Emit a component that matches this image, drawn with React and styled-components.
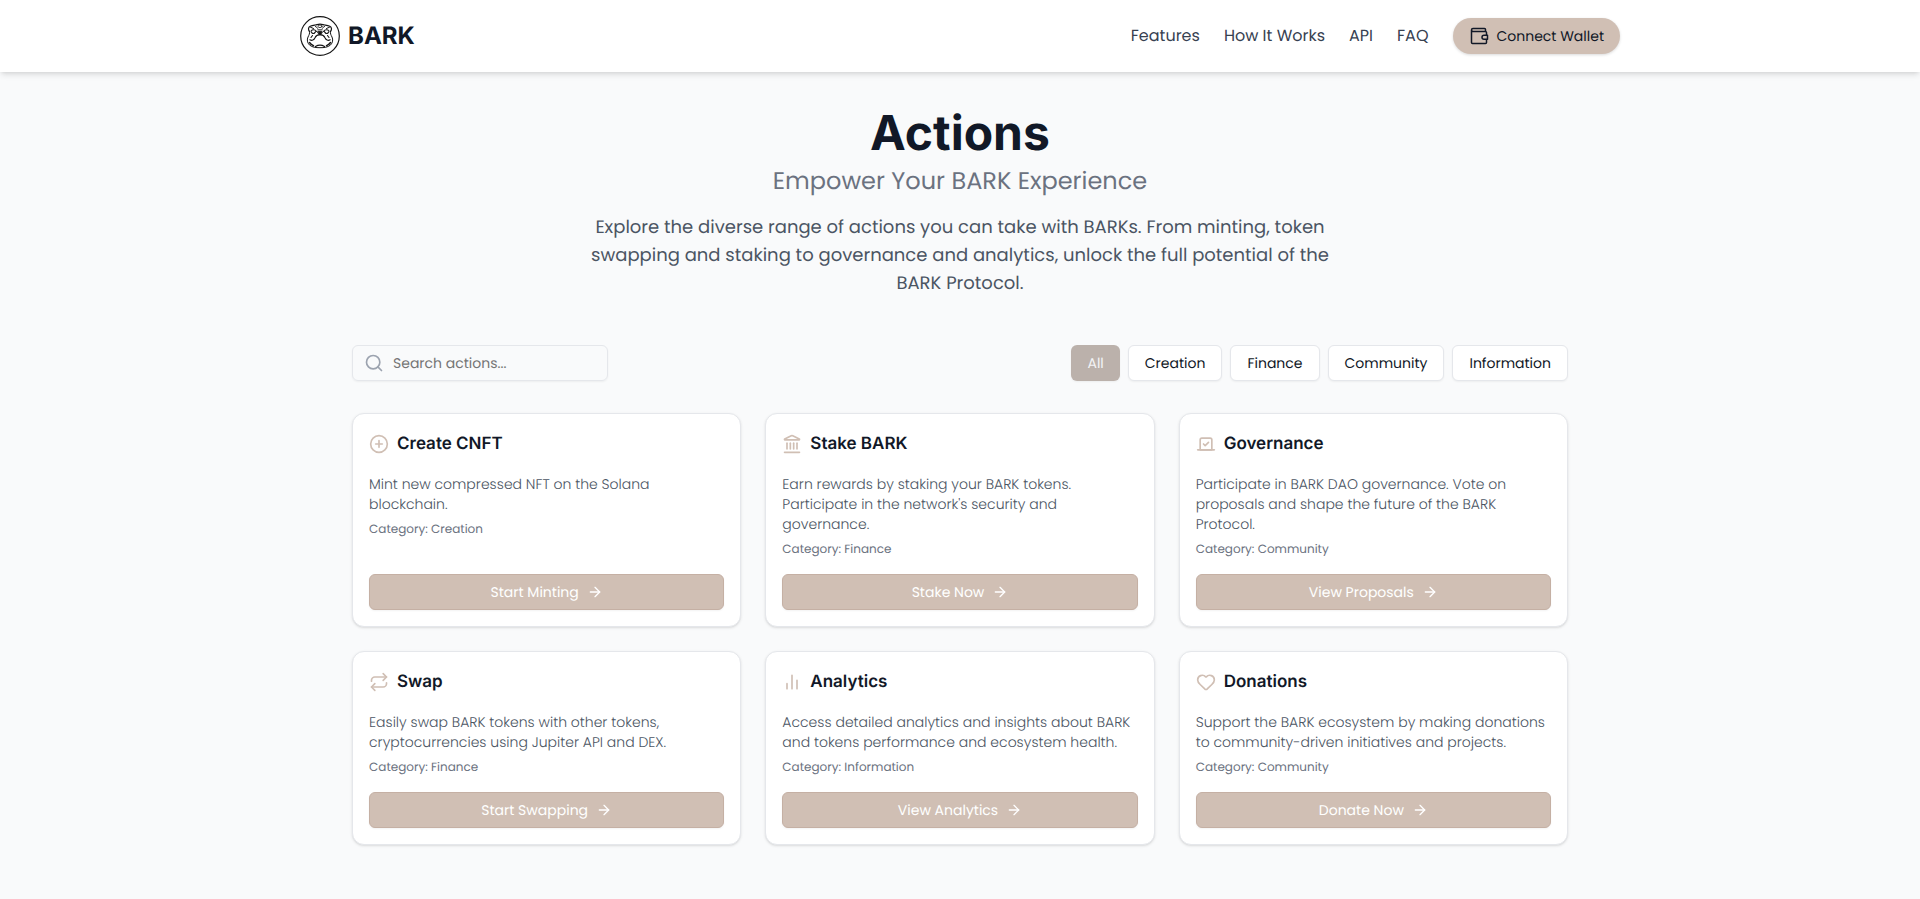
import React, { useState } from "react";
import styled, { createGlobalStyle } from "styled-components";
import { Search, CirclePlus, Landmark, Vote, Repeat, Heart, ArrowRight } from "lucide-react";

const Global = createGlobalStyle`
  *, *::before, *::after { box-sizing: border-box; }
  body {
    margin: 0;
    background: #f9fafb;
    color: #111827;
    font-family: Poppins, Inter, "Open Sans", sans-serif;
    text-rendering: geometricPrecision;
  }
  h1, h2, p { margin: 0; }
  button, input { font: inherit; text-rendering: inherit; }
`;

const Page = styled.div`
  min-height: 100vh;
`;

const Header = styled.header`
  background: #fff;
  box-shadow: 0 4px 6px -1px rgba(0, 0, 0, 0.1), 0 2px 4px -2px rgba(0, 0, 0, 0.1);
`;

const HeaderInner = styled.div`
  display: flex;
  align-items: center;
  justify-content: space-between;
  max-width: 1400px;
  margin: 0 auto;
  padding: 16px 40px;
`;

const Brand = styled.a`
  display: flex;
  align-items: center;
  gap: 8px;
  color: #111827;
  font-family: Inter, sans-serif;
  font-size: 24px;
  font-weight: 700;
  line-height: 32px;
  text-decoration: none;
`;

const Nav = styled.nav`
  display: flex;
  align-items: center;
  gap: 24px;
`;

const NavLink = styled.a`
  color: #374151;
  font-size: 16px;
  line-height: 24px;
  text-decoration: none;
`;

const WalletButton = styled.button`
  display: flex;
  align-items: center;
  justify-content: center;
  gap: 8px;
  height: 36px;
  padding: 0 16px;
  border: 0;
  border-radius: 18px;
  background: #d0bfb4;
  color: #111827;
  font-size: 14px;
  box-shadow: 0 1px 3px rgba(0, 0, 0, 0.15);
`;

const Main = styled.main`
  max-width: 1280px;
  margin: 0 auto;
  padding: 32px 32px 54px;
`;

const Hero = styled.section`
  text-align: center;
  margin-bottom: 47px;
`;

const Title = styled.h1`
  font-family: Inter, sans-serif;
  font-size: 48px;
  font-weight: 700;
  line-height: 57px;
  margin-bottom: 5px;
`;

const Subtitle = styled.p`
  color: #6b7280;
  font-size: 24px;
  line-height: 32px;
  margin-bottom: 16px;
`;

const Lead = styled.p`
  max-width: 768px;
  margin: 0 auto;
  color: #4b5563;
  font-size: 18px;
  line-height: 28px;
`;

const Toolbar = styled.div`
  display: flex;
  align-items: center;
  justify-content: space-between;
  margin-bottom: 32px;
`;

const SearchBox = styled.label`
  display: flex;
  align-items: center;
  gap: 9px;
  width: 256px;
  height: 36px;
  padding: 0 11px;
  border: 1px solid #e5e7eb;
  border-radius: 6px;
  color: #9ca3af;
  box-shadow: 0 1px 2px rgba(0, 0, 0, 0.05);
`;

const SearchInput = styled.input`
  flex: 1;
  min-width: 0;
  padding: 0;
  border: 0;
  outline: 0;
  background: transparent;
  color: #111827;
  font-size: 14px;
  &::placeholder { color: #757575; opacity: 1; }
`;

const Filters = styled.div`
  display: flex;
  gap: 8px;
`;

const FilterButton = styled.button`
  height: 36px;
  padding: 0 16px;
  border: ${(p) => (p.$active ? "0" : "1px solid #e5e7eb")};
  border-radius: 6px;
  background: ${(p) => (p.$active ? "#bbb1ab" : "#fff")};
  color: ${(p) => (p.$active ? "#f3f4f6" : "#111827")};
  font-size: 14px;
  box-shadow: 0 1px 2px rgba(0, 0, 0, 0.05);
`;

const Grid = styled.div`
  display: grid;
  grid-template-columns: repeat(3, minmax(0, 1fr));
  gap: 24px;
`;

const Card = styled.article`
  display: flex;
  flex-direction: column;
  padding: 16px;
  border: 1px solid #e5e7eb;
  border-radius: 12px;
  background: #fff;
  box-shadow: 0 1px 3px rgba(0, 0, 0, 0.1), 0 1px 2px -1px rgba(0, 0, 0, 0.1);
`;

const CardHeader = styled.header`
  display: flex;
  align-items: center;
  gap: 8px;
  margin-bottom: 16px;
  color: #d0bfb4;
`;

const CardTitle = styled.h2`
  color: #111827;
  font-family: Inter, sans-serif;
  font-size: 17px;
  font-weight: 600;
  line-height: 28px;
`;

const Description = styled.p`
  color: #4b5563;
  font-size: 14px;
  font-weight: 300;
  line-height: 20px;
  margin-bottom: 8px;
`;

const Category = styled.p`
  color: #6b7280;
  font-size: 12px;
  line-height: 16px;
  margin-bottom: 16px;
`;

const ActionButton = styled.button`
  display: flex;
  align-items: center;
  justify-content: center;
  gap: 8px;
  height: 36px;
  margin-top: auto;
  border: 1px solid #c5b0a4;
  border-radius: 6px;
  background: #d0bfb4;
  color: #fff;
  font-size: 14px;
  box-shadow: 0 1px 2px rgba(0, 0, 0, 0.05);
`;

const Logo = () => (
  <svg width="40" height="40" viewBox="0 0 40 40" fill="none" stroke="#151515" strokeLinecap="round" strokeLinejoin="round" aria-hidden="true">
    <circle cx="20" cy="20" r="19.3" strokeWidth="1.2" />
    {/* head, ears and brow */}
    <path d="M9.500 15.500C8 13.800 8.200 11 10.200 10.200c2-.8 3.800-1 5-1.200 1.800-.2 2.700-.8 4.800-.8s3 .6 4.800.8c1.200.2 3 .4 5 1.200 2 .8 2.200 3.600.7 5.300" strokeWidth="1.200" />
    <path d="M9.500 15.500c.5 2-.5 3.500-1.500 5.500-1.200 2.600-.8 5.800 1.500 8 2.600 2.400 6.500 2.700 10.500 2.700s7.900-.3 10.500-2.700c2.300-2.200 2.700-5.400 1.500-8-1-2-2-3.500-1.500-5.500" strokeWidth="1" />
    <path d="M10.500 11.200l3 1.300M29.500 11.200l-3 1.300M15.500 10.500c1 .2 1.500 1 2 1.800M24.500 10.500c-1 .2-1.500 1-2 1.800" strokeWidth="1" />
    <ellipse cx="20" cy="10.300" rx="2" ry="1.300" strokeWidth=".8" />
    {/* eyes and nose */}
    <path d="M11 15c1.500-1.800 4-1.600 5.200.2L14 17.500c-1.500.3-2.800-.8-3-2.500ZM29 15c-1.500-1.800-4-1.600-5.200.2L26 17.500c1.500.3 2.800-.8 3-2.500Z" strokeWidth="1.100" />
    <path d="M16.200 15.200 18 16.500M23.800 15.200 22 16.500M17.800 13.800h4.400" strokeWidth=".9" />
    <path d="M18.300 15.300h3.400v2.100L20 18.600l-1.700-1.200Z" fill="#151515" strokeWidth=".8" />
    {/* muzzle and jowls */}
    <path d="M20 18.600c-2.500.2-4.200 1.200-5 3.200-1 2.300-3 3.200-5.200 2M20 18.600c2.500.2 4.200 1.200 5 3.200 1 2.300 3 3.200 5.200 2M12.500 19.500l-1.500 2M27.500 19.500l1.500 2" strokeWidth="1.100" />
    <path d="M9.500 26.500c1 1.500 2.200 2.600 4 3.200M30.500 26.500c-1 1.500-2.200 2.600-4 3.200M15.500 30.500c2.800-1.700 6.200-1.700 9 0" strokeWidth="1.400" />
  </svg>
);

const WalletIcon = () => (
  <svg width="20" height="20" viewBox="0 0 20 20" fill="none" stroke="currentColor" strokeWidth="1.500" strokeLinejoin="round" aria-hidden="true">
    <path d="M17.500 9V6.500a1 1 0 0 0-1-1H4a1.500 1.500 0 0 1 0-3h11.500a1 1 0 0 1 1 1v2M2.500 4v12.500a1 1 0 0 0 1 1h13a1 1 0 0 0 1-1V13.500" />
    <path d="M18.500 9.300H15a2 2 0 0 0 0 4h3.500Z" />
  </svg>
);

const BarsIcon = ({ size }) => (
  <svg width={size} height={size} viewBox="0 0 24 24" fill="none" stroke="currentColor" strokeWidth="2" strokeLinecap="round" aria-hidden="true">
    <path d="M18 20V10M12 20V4M6 20v-6" />
  </svg>
);

const filters = ["All", "Creation", "Finance", "Community", "Information"];

const actions = [
  { icon: CirclePlus, title: "Create CNFT", text: "Mint new compressed NFT on the Solana blockchain.", category: "Creation", button: "Start Minting" },
  { icon: Landmark, title: "Stake BARK", text: "Earn rewards by staking your BARK tokens. Participate in the network's security and governance.", category: "Finance", button: "Stake Now" },
  { icon: Vote, title: "Governance", text: "Participate in BARK DAO governance. Vote on proposals and shape the future of the BARK Protocol.", category: "Community", button: "View Proposals" },
  { icon: Repeat, title: "Swap", text: "Easily swap BARK tokens with other tokens, cryptocurrencies using Jupiter API and DEX.", category: "Finance", button: "Start Swapping" },
  { icon: BarsIcon, title: "Analytics", text: "Access detailed analytics and insights about BARK and tokens performance and ecosystem health.", category: "Information", button: "View Analytics" },
  { icon: Heart, title: "Donations", text: "Support the BARK ecosystem by making donations to community-driven initiatives and projects.", category: "Community", button: "Donate Now" },
];

export default function App() {
  const [active, setActive] = useState("All");
  const [query, setQuery] = useState("");
  const shown = actions.filter(
    (a) => (active === "All" || a.category === active) && a.title.toLowerCase().includes(query.toLowerCase())
  );
  return (
    <Page>
      <Global />
      <Header>
        <HeaderInner>
          <Brand href="#"><Logo />BARK</Brand>
          <Nav>
            <NavLink href="#features">Features</NavLink>
            <NavLink href="#how">How It Works</NavLink>
            <NavLink href="#api">API</NavLink>
            <NavLink href="#faq">FAQ</NavLink>
            <WalletButton type="button"><WalletIcon />Connect Wallet</WalletButton>
          </Nav>
        </HeaderInner>
      </Header>
      <Main>
        <Hero>
          <Title>Actions</Title>
          <Subtitle>Empower Your BARK Experience</Subtitle>
          <Lead>
            Explore the diverse range of actions you can take with BARKs. From minting, token swapping and staking to
            governance and analytics, unlock the full potential of the BARK Protocol.
          </Lead>
        </Hero>
        <Toolbar>
          <SearchBox>
            <Search size={20} />
            <SearchInput type="text" aria-label="Search actions" placeholder="Search actions..." value={query} onChange={(e) => setQuery(e.target.value)} />
          </SearchBox>
          <Filters>
            {filters.map((name) => (
              <FilterButton key={name} type="button" $active={active === name} onClick={() => setActive(name)}>{name}</FilterButton>
            ))}
          </Filters>
        </Toolbar>
        <Grid>
          {shown.map(({ icon: Icon, title, text, category, button }) => (
            <Card key={title}>
              <CardHeader><Icon size={20} /><CardTitle>{title}</CardTitle></CardHeader>
              <Description>{text}</Description>
              <Category>Category: {category}</Category>
              <ActionButton type="button">{button}<ArrowRight size={16} /></ActionButton>
            </Card>
          ))}
        </Grid>
      </Main>
    </Page>
  );
}
